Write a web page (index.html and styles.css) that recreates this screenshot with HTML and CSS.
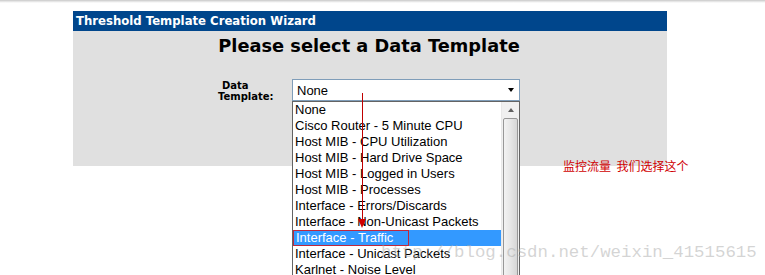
FILE: index.html
```html
<!DOCTYPE html>
<html>
<head>
<meta charset="utf-8">
<link rel="stylesheet" href="styles.css">
</head>
<body>
<div class="topline"></div>
<div class="wizard">
  <div class="titlebar">Threshold Template Creation Wizard</div>
  <div class="panel">
    <h1 class="heading">Please select a Data Template</h1>
    <div class="row">
      <div class="label"><span class="l1">Data</span><span class="l2">Template:</span></div>
      <div class="field">
        <div class="select"><span>None</span><span class="caret"></span></div>
        <div class="list">
          <div class="items">
            <div class="item">None</div>
            <div class="item">Cisco Router - 5 Minute CPU</div>
            <div class="item">Host MIB - CPU Utilization</div>
            <div class="item">Host MIB - Hard Drive Space</div>
            <div class="item">Host MIB - Logged in Users</div>
            <div class="item">Host MIB - Processes</div>
            <div class="item">Interface - Errors/Discards</div>
            <div class="item">Interface - Non-Unicast Packets</div>
            <div class="item sel"><span class="mark">Interface - Traffic</span></div>
            <div class="item">Interface - Unicast Packets</div>
            <div class="item">Karlnet - Noise Level</div>
          </div>
          <div class="scrollbar">
            <div class="sbtn"><span class="uparrow"></span></div>
            <div class="thumb"></div>
          </div>
        </div>
        <div class="arrow"><div class="shaft"></div><div class="head"></div></div>
      </div>
    </div>
  </div>
</div>
<div class="note">监控流量&nbsp;&nbsp;我们选择这个</div>
<div class="watermark">http://blog.csdn.net/weixin_41515615</div>
</body>
</html>
```
FILE: styles.css
```css
html, body { margin: 0; padding: 0; background: #fff; }
body { width: 765px; height: 275px; overflow: hidden; position: relative; font-family: "DejaVu Sans", Verdana, sans-serif; }
.topline { height: 3px; background: linear-gradient(#c8c8c8, #ececec 60%, #fff); }
.wizard { margin: 8px 0 0 73px; width: 594px; }
.titlebar { height: 20px; background: #00468c; color: #fff; font-weight: bold; font-size: 11.7px; line-height: 21px; padding-left: 3px; }
.panel { height: 135px; background: #e0e0e0; }
.heading { margin: 0; padding-top: 4px; font-size: 17.8px; line-height: 22px; text-align: center; font-weight: bold; color: #000; padding-right: 2px; }
.row { display: flex; margin-top: 22px; padding-left: 145px; }
.label { width: 74px; display: flex; flex-direction: column; font-size: 10px; font-weight: bold; line-height: 11px; padding-top: 1px; }
.l1 { padding-left: 4px; }
.field { position: relative; }
.select { width: 222px; height: 20px; border: 1px solid #7f9db9; background: #fff; display: flex; align-items: center; justify-content: space-between; padding-left: 4px; box-sizing: content-box; font-family: "Liberation Sans", Arial, sans-serif; font-size: 13px; }
.caret { width: 0; height: 0; border-left: 3.5px solid transparent; border-right: 3.5px solid transparent; border-top: 4px solid #000; margin-right: 5px; }
.list { position: absolute; left: 0; top: 22px; width: 226px; height: 180px; border: 1px solid #646464; border-bottom: none; background: #fff; display: flex; }
.items { flex: 1; font-family: "Liberation Sans", Arial, sans-serif; font-size: 13px; }
.item { height: 16px; line-height: 16px; padding-left: 2px; color: #000; }
.item.sel { background: #3399ff; color: #fff; padding-left: 0; }
.mark { display: inline-block; height: 14px; line-height: 14px; width: 112px; padding-left: 2px; border: 1px solid #c0283c; }
.scrollbar { width: 17px; background: #f0f0f0; display: flex; flex-direction: column; align-items: center; border-left: 1px solid #e8e8e8; }
.sbtn { width: 17px; height: 16px; display: flex; align-items: center; justify-content: center; }
.uparrow { width: 0; height: 0; border-left: 3.5px solid transparent; border-right: 3.5px solid transparent; border-bottom: 4px solid #606060; }
.thumb { width: 13px; flex: 1; border: 1px solid #979797; border-radius: 2px; background: linear-gradient(90deg, #f2f2f2, #e6e6e6 50%, #d6d6d6); }
.arrow { position: absolute; left: 66px; top: 14px; width: 9px; height: 135px; z-index: 2; }
.shaft { position: absolute; left: 4px; top: 0; width: 1px; height: 126px; background: #c00000; }
.head { position: absolute; left: 0; top: 126px; width: 0; height: 0; border-left: 4.5px solid transparent; border-right: 4.5px solid transparent; border-top: 9px solid #d00000; }
.note { position: absolute; left: 563px; top: 158px; font-family: "Noto Sans CJK SC", sans-serif; font-size: 12px; line-height: 16px; color: #d00000; }
.watermark { position: absolute; left: 381px; top: 242px; z-index: 3; font-family: "Liberation Mono", monospace; font-size: 17.4px; line-height: 22px; color: rgba(170,170,170,0.5); white-space: nowrap; }
```
